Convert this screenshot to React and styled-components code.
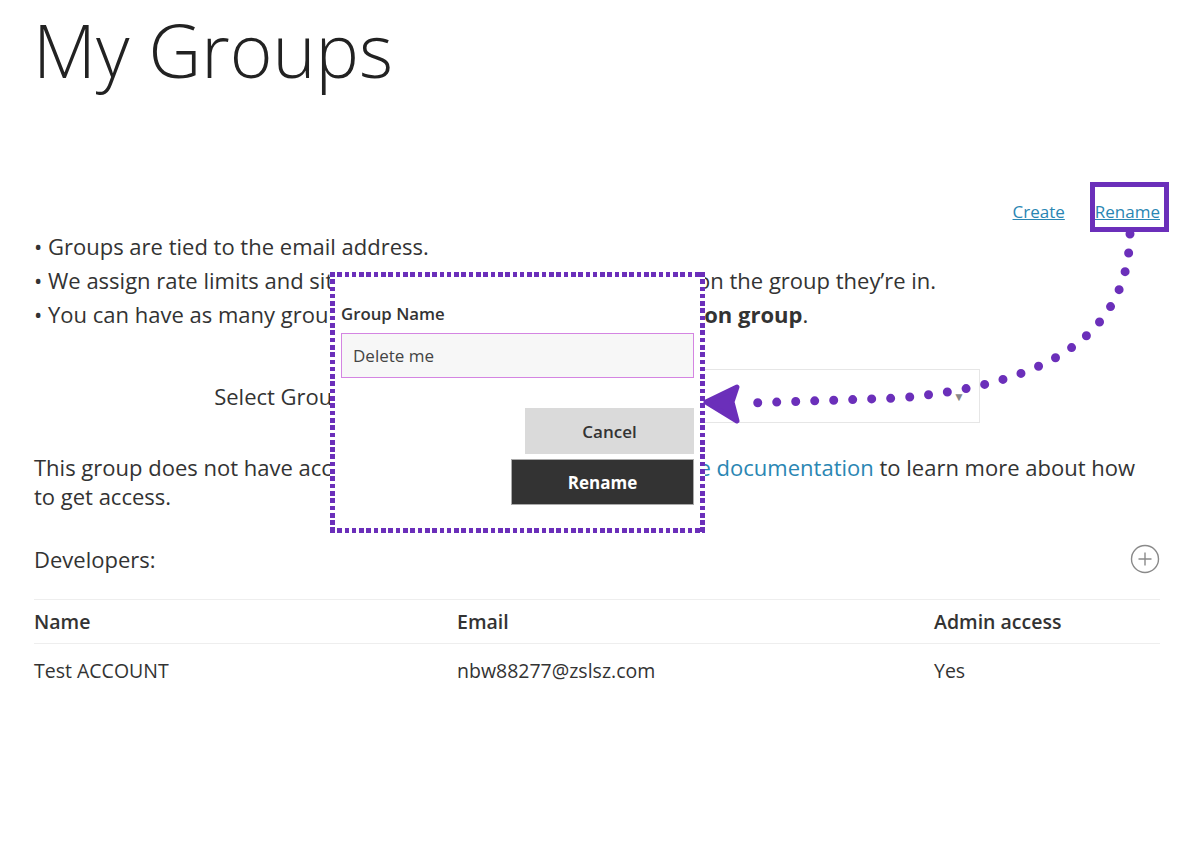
import React from 'react'
import styled, { createGlobalStyle } from 'styled-components'

const purple = '#6b2fba'

const GlobalStyle = createGlobalStyle`
  body {
    margin: 0;
    background: #fff;
    color: #333;
    font-family: "Open Sans", "Liberation Sans", sans-serif;
  }
`

const Page = styled.div`
  position: relative;
  width: 1183px;
  height: 845px;
  box-sizing: border-box;
  padding: 0 23px 0 34px;
  overflow: hidden;
`

const Title = styled.h1`
  margin: 0 0 0 -1px;
  font-size: 73px;
  font-weight: 300;
  line-height: 100px;
  color: #222;
`

const LinkBar = styled.div`
  display: flex;
  justify-content: flex-end;
  gap: 30px;
  margin-top: 100px;
  line-height: 24px;
`

const TextLink = styled.a`
  color: #2a86b3;
  font-size: 17px;
  text-decoration: underline;
  cursor: pointer;
`

const DocLink = styled.span`
  color: #2a86b3;
`

const HighlightLink = styled(TextLink)`
  position: relative;
  &::after {
    content: '';
    position: absolute;
    top: -18px;
    bottom: -8px;
    left: -5px;
    right: -9px;
    border: 5px solid ${purple};
  }
`

const BulletList = styled.ul`
  list-style: none;
  margin: 5px 0 0;
  padding: 0;
  font-size: 22px;
  line-height: 34px;
`

const Bullet = styled.li`
  &::before {
    content: '• ';
  }
`

const SelectRow = styled.div`
  display: flex;
  justify-content: center;
  align-items: center;
  gap: 16px;
  margin-top: 38px;
  font-size: 22px;
`

const SelectBox = styled.div`
  width: 618px;
  height: 54px;
  box-sizing: border-box;
  border: 1px solid #e6e6e6;
  display: flex;
  align-items: center;
  justify-content: flex-end;
  padding-right: 14px;
  color: #888;
  font-size: 12px;
`

const Paragraph = styled.p`
  margin: 30px 0 0;
  font-size: 22px;
  line-height: 29px;
`

const DevHeader = styled.div`
  display: flex;
  justify-content: space-between;
  align-items: center;
  height: 28px;
  margin-top: 34px;
  font-size: 22px;
`

const Table = styled.table`
  width: 100%;
  margin-top: 26px;
  border-collapse: collapse;
  border-top: 1px solid #eee;
  font-size: 19.5px;
`

const Th = styled.th`
  text-align: left;
  font-weight: 600;
  height: 43px;
  padding: 0;
  border-bottom: 1px solid #eee;
`

const Td = styled.td`
  height: 52px;
  padding: 0;
`

const dots = (dir) =>
  `repeating-linear-gradient(${dir}, ${purple} 0 4.6px, transparent 4.6px 7.3px)`

const Dialog = styled.div`
  position: absolute;
  left: 330px;
  top: 272px;
  width: 375px;
  height: 261px;
  box-sizing: border-box;
  padding: 32px 11px 28px;
  background:
    ${dots('90deg')} top left / 100% 5px no-repeat,
    ${dots('90deg')} bottom left / 100% 5px no-repeat,
    ${dots('180deg')} top left / 5px 100% no-repeat,
    ${dots('180deg')} top right / 5px 100% no-repeat,
    #fff;
`

const FieldLabel = styled.div`
  font-size: 16.8px;
  font-weight: 600;
  line-height: 20px;
  color: #333;
`

const Input = styled.div`
  margin-top: 9px;
  height: 45px;
  box-sizing: border-box;
  border: 1px solid #d485e2;
  background: #f7f7f7;
  padding: 0 11px;
  display: flex;
  align-items: center;
  font-size: 17px;
  color: #444;
`

const Buttons = styled.div`
  display: flex;
  flex-direction: column;
  align-items: flex-end;
  gap: 5px;
  margin-top: 30px;
`

const Button = styled.button`
  width: ${p => p.$width}px;
  height: 46px;
  border: 1px solid ${p => (p.$dark ? '#aaa' : '#dadada')};
  background: ${p => (p.$dark ? '#333' : '#dadada')};
  color: ${p => (p.$dark ? '#fff' : '#333')};
  font-family: inherit;
  font-size: 17px;
  font-weight: ${p => (p.$dark ? 700 : 600)};
  cursor: pointer;
`

const Overlay = styled.svg`
  position: absolute;
  left: 0;
  top: 0;
  pointer-events: none;
`

const PlusIcon = () => (
  <svg width="30" height="30" viewBox="0 0 30 30">
    <circle cx="15" cy="15" r="13.5" fill="none" stroke="#8a8a8a" strokeWidth="1.4" />
    <path d="M15 8.5v13M8.5 15h13" stroke="#8a8a8a" strokeWidth="1.4" />
  </svg>
)

export default function App() {
  return (
    <Page>
      <GlobalStyle />
      <Title>My Groups</Title>
      <LinkBar>
        <TextLink>Create</TextLink>
        <HighlightLink>Rename</HighlightLink>
      </LinkBar>
      <BulletList>
        <Bullet>Groups are tied to the email address.</Bullet>
        <Bullet>We assign rate limits and site privileges to your API keys, based on the group they’re in.</Bullet>
        <Bullet>
          You can have as many groups as you like, but only one <b>production group</b>.
        </Bullet>
      </BulletList>
      <SelectRow>
        <span>Select Group</span>
        <SelectBox>▼</SelectBox>
      </SelectRow>
      <Paragraph>
        This group does not have access to any APIs yet. Please review <DocLink>the documentation</DocLink> to learn more about how to get access.
      </Paragraph>
      <DevHeader>
        <span>Developers:</span>
        <PlusIcon />
      </DevHeader>
      <Table>
        <colgroup>
          <col style={{ width: 423 }} />
          <col style={{ width: 477 }} />
          <col />
        </colgroup>
        <thead>
          <tr>
            <Th>Name</Th>
            <Th>Email</Th>
            <Th>Admin access</Th>
          </tr>
        </thead>
        <tbody>
          <tr>
            <Td>Test ACCOUNT</Td>
            <Td>nbw88277@zslsz.com</Td>
            <Td>Yes</Td>
          </tr>
        </tbody>
      </Table>

      <Dialog>
        <FieldLabel>Group Name</FieldLabel>
        <Input>Delete me</Input>
        <Buttons>
          <Button $width={169}>Cancel</Button>
          <Button $width={183} $dark>Rename</Button>
        </Buttons>
      </Dialog>

      <Overlay width="1183" height="845" viewBox="0 0 1183 845">
        <path
          d="M1130 234 C1128 340 1040 385 900 398 L749 403"
          fill="none"
          stroke={purple}
          strokeWidth="9"
          strokeLinecap="round"
          strokeDasharray="0 19"
        />
        <path
          d="M706 402 L737 387 L732 402 L737 421 Z"
          fill={purple}
          stroke={purple}
          strokeWidth="5"
          strokeLinejoin="round"
        />
      </Overlay>
    </Page>
  )
}
